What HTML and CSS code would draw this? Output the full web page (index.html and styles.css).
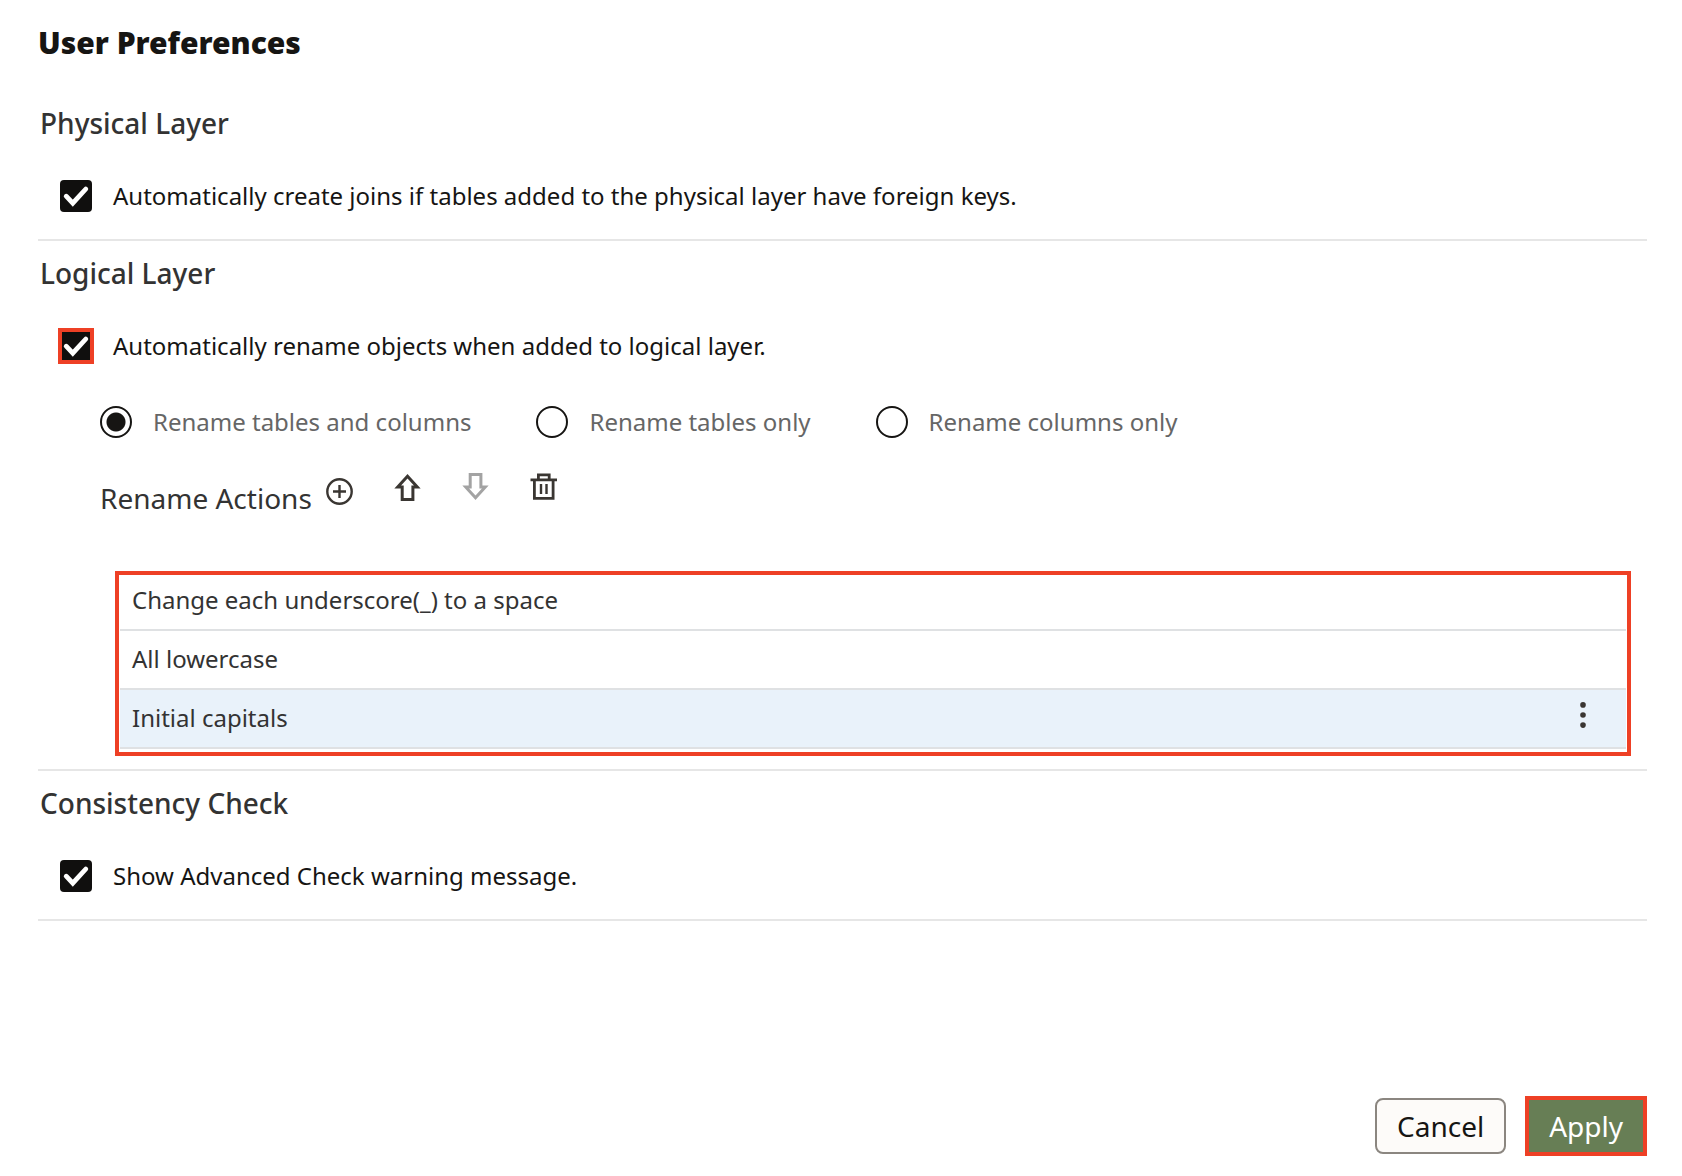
FILE: index.html
```html
<!DOCTYPE html>
<html lang="en">
<head>
<meta charset="utf-8">
<meta name="viewport" content="width=device-width, initial-scale=1">
<title>User Preferences</title>
<link rel="stylesheet" href="styles.css">
</head>
<body>
<form class="dialog">
  <h1 class="title">User Preferences</h1>

  <section class="section">
    <h2 class="heading">Physical Layer</h2>
    <label class="option"><input class="check" type="checkbox" checked><span>Automatically create joins if tables added to the physical layer have foreign keys.</span></label>
  </section>

  <section class="section section-logical">
    <h2 class="heading">Logical Layer</h2>
    <label class="option"><input class="check highlighted" type="checkbox" checked><span>Automatically rename objects when added to logical layer.</span></label>

    <div class="rename">
      <div class="radios">
        <label class="choice"><input class="radio" type="radio" name="scope" checked><span>Rename tables and columns</span></label>
        <label class="choice"><input class="radio" type="radio" name="scope"><span>Rename tables only</span></label>
        <label class="choice"><input class="radio" type="radio" name="scope"><span>Rename columns only</span></label>
      </div>

      <div class="toolbar">
        <h3 class="subheading">Rename Actions</h3>
        <div class="tools">
          <button class="tool tool-add" type="button" aria-label="Add">
            <svg viewBox="0 0 28 28" width="28" height="28" fill="none" stroke="currentColor" stroke-width="2.4"><circle cx="13.5" cy="13.5" r="12.2"/><path d="M13.5 7v13M7 13.5h13"/></svg>
          </button>
          <button class="tool" type="button" aria-label="Move up">
            <svg viewBox="0 0 28 28" width="28" height="28" fill="none" stroke="currentColor" stroke-width="3"><path d="M13.5 3.2L3.7 14.1H8.2V26.5H18.9V14.1H23.3Z"/></svg>
          </button>
          <button class="tool" type="button" aria-label="Move down" disabled>
            <svg viewBox="0 0 28 28" width="28" height="28" fill="none" stroke="currentColor" stroke-width="3"><path d="M13.5 24.8L3.7 13.9H8.2V1.6H18.9V13.9H23.3Z"/></svg>
          </button>
          <button class="tool" type="button" aria-label="Delete">
            <svg viewBox="0 0 28 28" width="28" height="28" fill="none" stroke="currentColor" stroke-width="2.8"><path d="M0.5 6.8h26.5M4.4 7v18.3h18.7V7M8.4 6.8V1.8h10.8v5"/><path d="M11 11v10M16.5 11v10" stroke-width="2.4"/></svg>
          </button>
        </div>
      </div>

      <ul class="actions">
        <li class="action">Change each underscore(_) to a space</li>
        <li class="action">All lowercase</li>
        <li class="action selected">Initial capitals
          <button class="more" type="button" aria-label="Actions">
            <svg viewBox="0 0 26 26" width="26" height="26" fill="currentColor"><circle cx="13" cy="2.9" r="2.8"/><circle cx="13" cy="13" r="2.8"/><circle cx="13" cy="23.1" r="2.8"/></svg>
          </button>
        </li>
      </ul>
    </div>
  </section>

  <section class="section">
    <h2 class="heading">Consistency Check</h2>
    <label class="option"><input class="check" type="checkbox" checked><span>Show Advanced Check warning message.</span></label>
  </section>

  <footer class="footer">
    <button class="button" type="button">Cancel</button>
    <button class="button apply" type="submit">Apply</button>
  </footer>
</form>
</body>
</html>
```
FILE: styles.css
```css
* {
  box-sizing: border-box;
}

body {
  margin: 0;
  background: #fff;
  color: #161513;
  font: 24px/32px "Noto Sans", sans-serif;
}

.dialog {
  display: flex;
  flex-direction: column;
  min-height: 100vh;
  padding: 20px 35px 20px 38px;
}

.title {
  margin: 0 0 25px;
  font-size: 30px;
  line-height: 46px;
  font-weight: 900;
}

.section {
  padding: 12px 0 27px;
  border-bottom: 2px solid #e6e6e6;
}

.section-logical {
  padding-bottom: 20px;
}

.heading {
  margin: 0 0 37px;
  padding-left: 2px;
  color: #333;
  font-size: 28px;
  line-height: 40px;
  font-weight: 500;
}

.option {
  display: flex;
  gap: 21px;
  padding-left: 22px;
}

.check,
.radio {
  flex: none;
  appearance: none;
  width: 32px;
  height: 32px;
  margin: 0;
}

.check {
  border-radius: 4px;
  background: #100f0e url("data:image/svg+xml,%3Csvg xmlns='http://www.w3.org/2000/svg' viewBox='0 0 32 32'%3E%3Cpath d='M6.2 16.2l6.6 7L25.8 9' fill='none' stroke='white' stroke-width='4.8' stroke-linecap='round'/%3E%3C/svg%3E");
}

.highlighted {
  outline: 4px solid #ee4025;
  outline-offset: -2px;
  border-radius: 0;
}

.rename {
  padding: 44px 16px 0 62px;
}

.radios {
  display: flex;
  gap: 65px;
  color: #666;
}

.choice {
  display: flex;
  gap: 21px;
}

.radio {
  border: 2px solid #161513;
  border-radius: 50%;
}

.radio:checked {
  background: radial-gradient(circle, #161513 9px, transparent 10px);
}

.toolbar {
  display: flex;
  gap: 14px;
  padding-top: 35px;
}

.subheading {
  margin: 5px 0 0;
  color: #333;
  font-size: 28px;
  line-height: 40px;
  font-weight: 400;
}

.tools {
  display: flex;
  align-items: flex-start;
  gap: 40px;
}

.tool,
.more {
  display: flex;
  padding: 0;
  border: 0;
  background: none;
  color: #3a3632;
}

.tool:disabled {
  color: #a3a3a3;
}

.tool-add {
  margin-top: 5px;
}

.actions {
  position: relative;
  margin: 54px 5px 0 20px;
  padding: 0;
  list-style: none;
  color: #333;
}

/* Frame drawn over the edges of the list */
.actions::after {
  content: "";
  position: absolute;
  inset: -1px -5px -7px;
  border: 4px solid #ee4025;
  pointer-events: none;
}

.action {
  display: flex;
  justify-content: space-between;
  align-items: flex-start;
  padding: 12px 30px 13px 12px;
  border-bottom: 2px solid #dfe1e3;
}

.selected {
  background: #e9f2fa;
}

.footer {
  display: flex;
  justify-content: flex-end;
  align-items: center;
  gap: 19px;
  margin-top: auto;
}

.button {
  padding: 6px 20px;
  border: 2px solid #8b8680;
  border-radius: 8px;
  background: #fdfbf9;
  color: #161513;
  font: 28px/40px "Noto Sans", sans-serif;
}

.apply {
  border: 4px solid #ee4025;
  border-radius: 0;
  background: #677e55;
  color: #fff;
}
```
